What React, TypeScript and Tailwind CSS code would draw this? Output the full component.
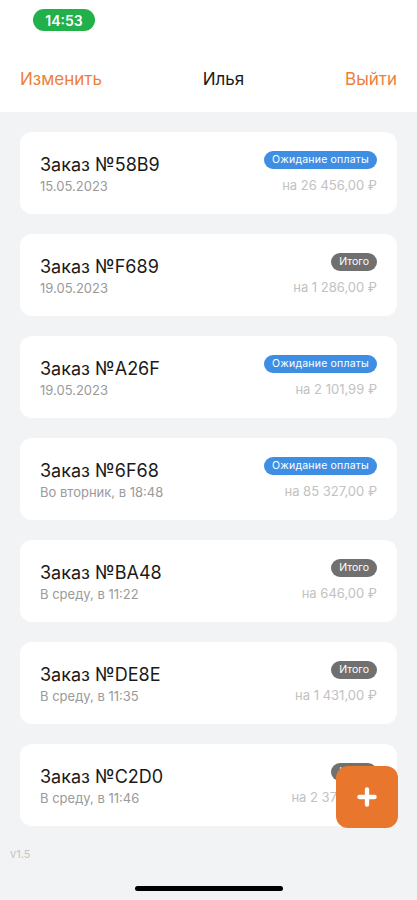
import { Plus } from 'lucide-react';

type Order = {
  code: string;
  date: string;
  status: 'wait' | 'total';
  amount: string;
};

const orders: Order[] = [
  { code: '58B9', date: '15.05.2023', status: 'wait', amount: 'на 26 456,00 ₽' },
  { code: 'F689', date: '19.05.2023', status: 'total', amount: 'на 1 286,00 ₽' },
  { code: 'A26F', date: '19.05.2023', status: 'wait', amount: 'на 2 101,99 ₽' },
  { code: '6F68', date: 'Во вторник, в 18:48', status: 'wait', amount: 'на 85 327,00 ₽' },
  { code: 'BA48', date: 'В среду, в 11:22', status: 'total', amount: 'на 646,00 ₽' },
  { code: 'DE8E', date: 'В среду, в 11:35', status: 'total', amount: 'на 1 431,00 ₽' },
  { code: 'C2D0', date: 'В среду, в 11:46', status: 'total', amount: 'на 2 376,00 ₽' }
];

const OrderCard = ({ order }: { order: Order }) => (
  <div className="flex justify-between rounded-[12px] bg-white px-5 py-[19px]">
    <div className="flex flex-col">
      <span className="mt-[3px] text-[18px] leading-[22px] text-[#1a1a1a]">
        Заказ №{order.code}
      </span>
      <span className="mt-[2px] text-[13px] leading-[17px] text-[#9a9a9a]">{order.date}</span>
    </div>
    <div className="flex flex-col items-end">
      {order.status === 'wait' ? (
        <span className="flex h-[18px] items-center rounded-full bg-[#3e8fe3] px-[8px] text-[10.5px] tracking-[0.2px] text-white">
          Ожидание оплаты
        </span>
      ) : (
        <span className="flex h-[18px] items-center rounded-full bg-[#707070] px-[8px] text-[10.5px] text-white">
          Итого
        </span>
      )}
      <span className="mt-[8px] text-[13px] leading-[17px] text-[#c2c2c2]">{order.amount}</span>
    </div>
  </div>
);

export default function App() {
  return (
    <div
      className="relative h-[900px] w-[417px] overflow-hidden bg-[#f2f3f5]"
      style={{ fontFamily: 'Inter, "Noto Sans", sans-serif' }}
    >
      {/* header */}
      <div className="h-[112px] bg-white">
        <div className="pl-[33px] pt-[9px]">
          <span className="flex h-[22px] w-[62px] items-center justify-center rounded-full bg-[#22b04b] text-[14px] font-semibold text-white">
            14:53
          </span>
        </div>
        <div className="mt-[36px] flex items-center justify-between px-5">
          <span className="text-[17px] text-[#ee7f3b]">Изменить</span>
          <span className="text-[17px] text-[#1a1a1a]">Илья</span>
          <span className="text-[17px] text-[#ee7f3b]">Выйти</span>
        </div>
      </div>

      {/* orders */}
      <div className="flex flex-col gap-[20px] px-5 pt-[20px]">
        {orders.map((o) => (
          <OrderCard key={o.code} order={o} />
        ))}
      </div>

      <div className="pl-[10px] pt-[20px] text-[11px] text-[#c4c4c4]">v1.5</div>

      {/* FAB */}
      <button className="absolute left-[336px] top-[766px] flex h-[62px] w-[62px] items-center justify-center rounded-[12px] bg-[#e8762c] text-white">
        <Plus size={26} strokeWidth={4} />
      </button>

      {/* home indicator */}
      <div className="absolute left-[135px] top-[886px] h-[5px] w-[148px] rounded-full bg-black" />
    </div>
  );
}
